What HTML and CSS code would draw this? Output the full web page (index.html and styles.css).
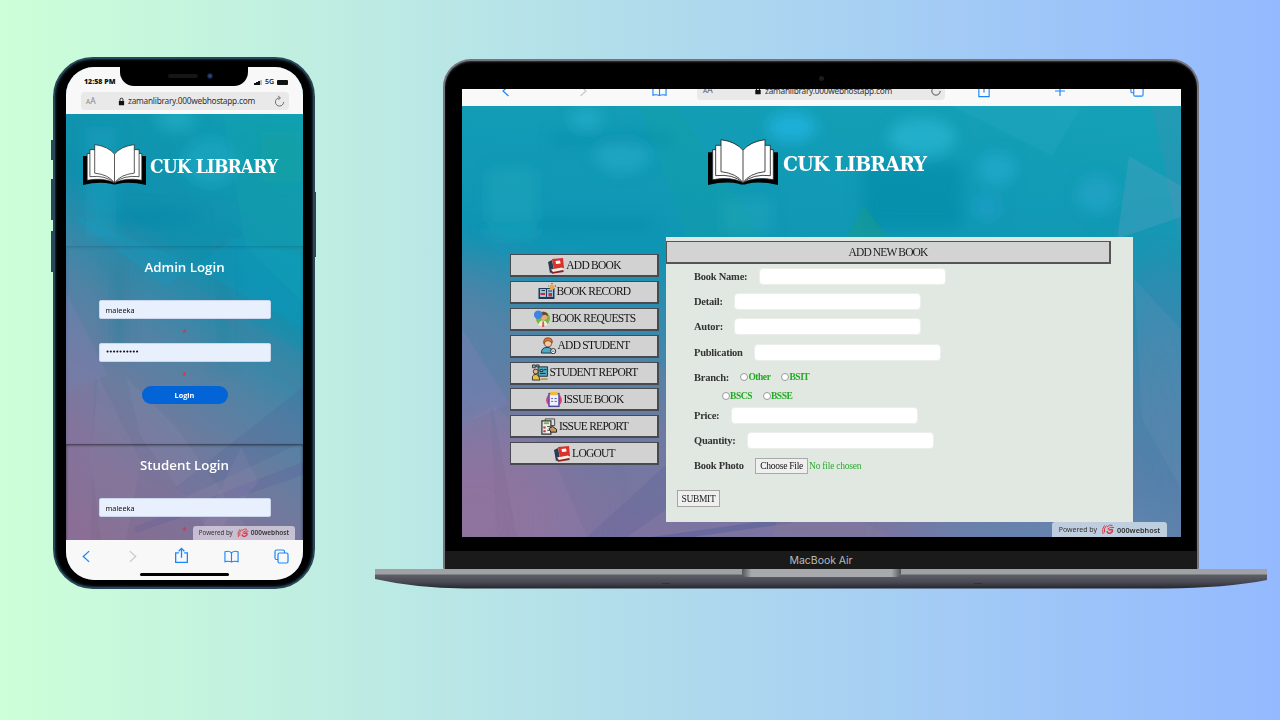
FILE: index.html
```html
<!DOCTYPE html>
<html lang="en">
<head>
<meta charset="utf-8">
<title>CUK Library</title>
<link rel="stylesheet" href="styles.css">
</head>
<body>
<svg class="defs" width="0" height="0">
  <defs>
    <linearGradient id="wash" x1=".65" y1="0" x2=".35" y2="1">
      <stop offset="0" stop-color="#0f9fb4"/><stop offset=".36" stop-color="#118fad"/>
      <stop offset=".55" stop-color="#4f83a5"/><stop offset=".7" stop-color="#6d7b9e"/><stop offset=".82" stop-color="#7d7399"/><stop offset="1" stop-color="#866c90"/>
    </linearGradient>
    <linearGradient id="washWide" x1=".6" y1="0" x2=".4" y2="1">
      <stop offset="0" stop-color="#14a0b6"/><stop offset=".42" stop-color="#0f95b4"/>
      <stop offset=".62" stop-color="#4a84a8"/><stop offset=".8" stop-color="#6f7aa2"/><stop offset="1" stop-color="#7d74a0"/>
    </linearGradient>
    <filter id="soft" x="-30%" y="-30%" width="160%" height="160%"><feGaussianBlur stdDeviation="7"/></filter>
    <filter id="mist" x="-50%" y="-50%" width="200%" height="200%"><feGaussianBlur stdDeviation="28"/></filter>
    <linearGradient id="deck" x1="0" y1="0" x2="0" y2="1"><stop offset="0" stop-color="#606168"/><stop offset=".6" stop-color="#464751"/><stop offset="1" stop-color="#24252d"/></linearGradient>
    <linearGradient id="lip" x1="0" x2="1"><stop offset="0" stop-color="#55565a"/><stop offset=".06" stop-color="#a8a9ad"/><stop offset=".94" stop-color="#a8a9ad"/><stop offset="1" stop-color="#55565a"/></linearGradient>
  </defs>
  <symbol id="book" viewBox="0 0 210 138" preserveAspectRatio="none">
    <path d="M0 40H14V120Q62 114 105 128Q148 114 196 120V40H210V138Q158 126 118 134Q105 139 92 134Q52 126 0 138Z" fill="#000"/>
    <g fill="#fff" stroke="#222" stroke-width="2.5" stroke-linejoin="round">
      <path d="M105 131Q70 112 14 122V32H28L105 60L182 32H196V122Q140 112 105 131Z"/>
      <path d="M105 131Q76 104 23 110V19H42L105 50L168 19H187V110Q134 104 105 131Z"/>
      <path d="M105 131Q86 103 39 98V2Q84 8 105 34Q126 8 171 2V98Q124 103 105 131Z"/>
      <path d="M105 34V131"/>
    </g>
  </symbol>
  <symbol id="back" viewBox="0 0 14 14"><path d="M9.5 2L4 7L9.5 12"/></symbol>
  <symbol id="fwd" viewBox="0 0 14 14"><path d="M4.5 2L10 7L4.5 12"/></symbol>
  <symbol id="share" viewBox="0 0 14 16"><path d="M4.5 5.5H1.5V14.5H12.5V5.5H9.5M7 10V1.5M4.3 4L7 1.3L9.7 4"/></symbol>
  <symbol id="openbook" viewBox="0 0 16 14"><path d="M8 3Q5 .5 1 2V12.5Q5 11.5 8 12.8Q11 11.5 15 12.5V2Q11 .5 8 3V12.8"/></symbol>
  <symbol id="tabs" viewBox="0 0 15 15"><path d="M10.5 4V2.5Q10.5 1 9 1H2.5Q1 1 1 2.5V9Q1 10.5 2.5 10.5H4"/><rect x="4" y="4" width="10" height="10" rx="1.5"/></symbol>
  <symbol id="plus" viewBox="0 0 14 14"><path d="M7 2V12M2 7H12"/></symbol>
  <symbol id="reload" viewBox="0 0 12 14"><path d="M6 3A4.5 4.5 0 1 0 10.5 7.5M4.5 1L7 3L4.8 5.4"/></symbol>
  <symbol id="lock" viewBox="0 0 8 10"><rect x="1" y="4.5" width="6" height="4.8" rx=".6" fill="#111"/><path d="M2.3 5V3Q2.3 1.2 4 1.2T5.7 3V5" fill="none" stroke="#111"/></symbol>
  <symbol id="host" viewBox="0 0 26 22"><g fill="none" stroke="#d93a42" stroke-width="2"><path d="M6 3Q0 10 3 20M10 3Q4 9 6 17"/><path d="M11 6Q16 0 22 3M12 10Q17 5 25 7"/><path d="M11 14Q12 20 18 18Q24 15 21 11L14 12" stroke-width="3"/></g></symbol>

  <symbol id="i-books" viewBox="0 0 18 17"><path d="M1 5L5 3L7 14L3 16Z" fill="#2b3b52"/><path d="M5 2L16 1L17 11L7 13Z" fill="#d8322b"/><path d="M8.5 4L13 3.5L13.6 6.5L9 7Z" fill="#fff"/><path d="M4 12.5L15 10.5L17 12.5L6 15Z" fill="#f8efe0"/><path d="M3 13.5L6 15L16.5 13V15L5 16.8Z" fill="#8d1e24"/></symbol>
  <symbol id="i-record" viewBox="0 0 18 17"><path d="M.5 5H16.5V16H.5Z" fill="#1e3a55"/><path d="M2 6H8V14H2ZM9 6H15V14H9Z" fill="#9fc4da"/><path d="M2.5 10H7V12H2.5ZM10.5 10H14V13.5H10.5Z" fill="#c52e38"/><path d="M3.5 7.5H7M10 8H14" stroke="#1e3a55"/><circle cx="14" cy="4" r="2.5" fill="#eda348"/><path d="M14 0V1M10.5 3H11M17 3H18" stroke="#333"/></symbol>
  <symbol id="i-request" viewBox="0 0 18 18"><circle cx="10" cy="9" r="7.5" fill="#78b83a"/><path d="M5 16Q6 11 10 11T15 16L10 18Z" fill="#f5e8e1"/><circle cx="11" cy="7" r="3.7" fill="#e8ab78"/><path d="M7.5 6Q8 1 12 2T15 7L13 5Z" fill="#74412c"/><circle cx="5" cy="5" r="4.5" fill="#3e83e6"/><path d="M9.5 12H11L11.5 18H9Z" fill="#dc5a51"/></symbol>
  <symbol id="i-student" viewBox="0 0 18 18"><path d="M2 17Q2 11 8 11Q14 11 14 17Z" fill="#4aa9c9" stroke="#26313b"/><circle cx="9" cy="6.5" r="4" fill="#f6c9a1" stroke="#333" stroke-width=".7"/><path d="M4.5 7V4Q5 .8 9 .8T13.5 4V6Q9 3 7 4Q6 6 4.5 7Z" fill="#e2772d" stroke="#5b321c" stroke-width=".7"/><circle cx="14.5" cy="15" r="2.7" fill="#fff" stroke="#222"/><path d="M13 15H16" stroke="#222" stroke-width=".8"/></symbol>
  <symbol id="i-report" viewBox="0 0 18 18"><path d="M7 3H17V13H7Z" fill="#51a5bd" stroke="#203640"/><path d="M9 6H12V8H9ZM13 6H16M9 10H15" fill="#8fd0dd" stroke="#17303b"/><path d="M1 1H4V4H1ZM5 1H8V3H5Z" fill="#77b8c2" stroke="#333"/><circle cx="4.5" cy="8" r="2.6" fill="#e9b480" stroke="#333"/><path d="M1 17V13Q2 11 5 11T9 17Z" fill="#e9bf3c" stroke="#333"/><path d="M10 16H17" stroke="#b99c3c" stroke-width="2"/></symbol>
  <symbol id="i-issue" viewBox="0 0 18 18"><ellipse cx="9" cy="9.5" rx="8.5" ry="7" fill="#dc4183"/><path d="M3 2H15V17H3Z" fill="#5148a0"/><path d="M4.5 3.5H13.5V15.5H4.5Z" fill="#eef0ff"/><path d="M5 1H13V4.5H5Z" fill="#f3bb3c"/><path d="M6 8H8M9.5 8H12M6 11H8M9.5 11H12" stroke="#4f5aa8"/></symbol>
  <symbol id="i-issuereport" viewBox="0 0 18 18"><path d="M5 1H15V8H5Z" fill="#ddd" stroke="#444"/><path d="M1.5 3H11V17H1.5Z" fill="#eee" stroke="#333" stroke-width="1.3"/><path d="M3.5 4.5H9V6.5H3.5Z" fill="#73b552"/><path d="M3 9H5.5V11H3ZM3 13H5.5V15H3Z" fill="#c23737"/><path d="M7 9H10M7 13H10" stroke="#444"/><path d="M9 11L13 9L17 12V15H11Z" fill="#c9965f" stroke="#222"/></symbol>
</svg>

<main class="stage">
  <section class="phone">
    <i class="key k1"></i><i class="key k2"></i><i class="key k3"></i><i class="key k4"></i>
    <div class="phone-screen">
      <svg class="backdrop" viewBox="0 0 237 513" preserveAspectRatio="none">
        <rect width="237" height="513" fill="url(#wash)"/>
        <g filter="url(#soft)">
          <ellipse cx="110" cy="52" rx="20" ry="12" fill="#2cb5cd" opacity=".5"/><ellipse cx="145" cy="95" rx="28" ry="24" fill="#22aac4" opacity=".6"/>
          <ellipse cx="80" cy="150" rx="55" ry="8" fill="#0587a5" opacity=".5"/><rect x="195" y="65" width="40" height="50" fill="#0b9e9d" opacity=".6"/>
          <rect x="20" y="60" width="30" height="110" fill="#16a5c3" opacity=".4"/>
          <rect x="45" y="195" width="16" height="90" fill="#2c7f9c" opacity=".5"/><rect x="150" y="170" width="14" height="130" fill="#27809f" opacity=".35"/>
        </g>
        <path d="M157 47L180 180L237 235V47Z" fill="#18a8ab" opacity=".2"/>
        <path d="M0 145L110 190L237 262V190L170 170L100 220Z" fill="#0aa5cf" opacity=".22"/>
        <path d="M0 145L237 285V330L130 225Z" fill="#5f7b9a" opacity=".18"/>
        <path d="M0 225L42 308L0 325Z" fill="#8080b8" opacity=".3"/><path d="M0 325L28 312L25 473H0Z" fill="#a07bae" opacity=".18"/>
        <path d="M32 308L75 395L60 473H35L25 395Z" fill="#a08bb2" opacity=".14"/>
        <path d="M60 310L110 360L190 473H150L75 370Z" fill="#a49abc" opacity=".12"/>
        <path d="M110 420L237 320V375L120 430Z" fill="#4b5f98" opacity=".2"/><path d="M68 460L237 395V408L70 466Z" fill="#57539a" opacity=".2"/><path d="M130 473L175 380L192 415L145 473Z" fill="#a88bbd" opacity=".15"/>
      </svg>
      <header class="phone-top">
        <div class="status"><b>12:58 PM</b><span class="signal"><i></i><i></i><i></i><i></i></span><b class="net">5G</b><i class="battery"></i></div>
        <div class="address"><span class="aa"><small>A</small>A</span><svg class="lock"><use href="#lock"/></svg><span class="url">zamanlibrary.000webhostapp.com</span><svg class="reload line"><use href="#reload"/></svg></div>
      </header>
      <div class="notch"><i class="speaker"></i><i class="lens"></i></div>
      <div class="phone-page">
        <div class="brand"><svg><use href="#book"/></svg><span>CUK LIBRARY</span></div>
        <form class="login">
          <h2>Admin Login</h2>
          <div class="field">maleeka</div><em>*</em>
          <div class="field dots">••••••••••</div><em>*</em>
          <div class="login-btn">Login</div>
        </form>
        <form class="login second">
          <h2>Student Login</h2>
          <div class="field">maleeka</div><em>*</em>
        </form>
        <div class="badge"><span>Powered by</span><svg><use href="#host"/></svg><b>000webhost</b></div>
      </div>
      <footer class="phone-nav">
        <div class="nav-row line"><svg><use href="#back"/></svg><svg class="off"><use href="#fwd"/></svg><svg class="tall"><use href="#share"/></svg><svg><use href="#openbook"/></svg><svg><use href="#tabs"/></svg></div>
        <i class="home"></i>
      </footer>
    </div>
  </section>

  <section class="laptop">
    <div class="lid">
      <i class="camera"></i>
      <div class="laptop-screen">
        <svg class="backdrop" viewBox="0 0 719 448" preserveAspectRatio="none">
          <rect width="719" height="448" fill="url(#washWide)"/>
          <g filter="url(#mist)"><ellipse cx="15" cy="430" rx="90" ry="90" fill="#8d6f9a" opacity=".8"/><ellipse cx="0" cy="260" rx="50" ry="80" fill="#5f80a6" opacity=".8"/><ellipse cx="700" cy="330" rx="45" ry="170" fill="#4b83ad" opacity=".8"/><ellipse cx="590" cy="450" rx="140" ry="25" fill="#5b8bb5"/></g>
          <g filter="url(#soft)">
            <ellipse cx="124" cy="30" rx="17" ry="12" fill="#2ab1cd" opacity=".6"/><ellipse cx="160" cy="66" rx="27" ry="18" fill="#25abc9" opacity=".6"/>
            <ellipse cx="330" cy="38" rx="25" ry="15" fill="#1eb3e0" opacity=".8"/><ellipse cx="460" cy="48" rx="34" ry="19" fill="#29b6d3" opacity=".7"/><ellipse cx="535" cy="80" rx="19" ry="16" fill="#22a9cc" opacity=".8"/>
            <ellipse cx="525" cy="118" rx="13" ry="14" fill="#189fc7" opacity=".8"/><ellipse cx="635" cy="105" rx="20" ry="18" fill="#23a6cd" opacity=".6"/>
            <path d="M90 45H210V55H90ZM20 130H190V140H20ZM400 75H500V140H400Z" fill="#058aa7" opacity=".6"/><path d="M25 80H75V150H25ZM260 110H310V145H260Z" fill="#24a9bd" opacity=".4"/>
          </g>
          <path d="M178 17L225 150H300L215 17Z" fill="#14a79b" opacity=".2"/><path d="M640 17H719V160L690 17Z" fill="#4a8bb0" opacity=".25"/>
          <path d="M719 97L667 67L655 150L719 128Z" fill="#6fa4c3" opacity=".25"/><path d="M385 148L402 117L425 148Z" fill="#179b8b" opacity=".5"/><path d="M490 17L590 67L620 17Z" fill="#3bb6cd" opacity=".15"/>
          <path d="M0 134L205 215V280L110 220Z" fill="#2192bc" opacity=".22"/><path d="M0 240L48 315L0 335Z" fill="#8080b8" opacity=".3"/><path d="M0 335L28 318L35 448H0Z" fill="#a07bae" opacity=".2"/>
          <path d="M30 315L90 365L125 448H55Z" fill="#a087b5" opacity=".16"/><path d="M125 448L205 375V420L165 448Z" fill="#4c5998" opacity=".2"/><path d="M190 448L330 428V434L230 448Z" fill="#4c5998" opacity=".4"/>
          <path d="M315 432H400L430 448H310Z" fill="#84789c" opacity=".5"/><path d="M672 190L719 240V400L680 330Z" fill="#7294b8" opacity=".18"/>
        </svg>
        <div class="laptop-bar"><div class="bar-row line">
          <svg class="b1"><use href="#back"/></svg><svg class="b2 off"><use href="#fwd"/></svg><svg class="b3"><use href="#openbook"/></svg>
          <div class="address wide"><span class="aa"><small>A</small>A</span><svg class="lock"><use href="#lock"/></svg><span class="url">zamanlibrary.000webhostapp.com</span><svg class="reload"><use href="#reload"/></svg></div>
          <svg class="b4"><use href="#share"/></svg><svg class="b5"><use href="#plus"/></svg><svg class="b6"><use href="#tabs"/></svg>
        </div></div>
        <div class="laptop-page">
          <div class="brand large"><svg><use href="#book"/></svg><span>CUK LIBRARY</span></div>
          <div class="columns">
            <nav class="menu">
              <a><svg><use href="#i-books"/></svg>ADD BOOK</a>
              <a><svg><use href="#i-record"/></svg>BOOK RECORD</a>
              <a><svg><use href="#i-request"/></svg>BOOK REQUESTS</a>
              <a><svg><use href="#i-student"/></svg>ADD STUDENT</a>
              <a><svg><use href="#i-report"/></svg>STUDENT REPORT</a>
              <a><svg><use href="#i-issue"/></svg>ISSUE BOOK</a>
              <a><svg><use href="#i-issuereport"/></svg>ISSUE REPORT</a>
              <a><svg><use href="#i-books"/></svg>LOGOUT</a>
            </nav>
            <div class="panel">
              <div class="panel-title">ADD NEW BOOK</div>
              <div class="rows">
                <div class="row"><label>Book Name:</label><i class="input"></i></div>
                <div class="row"><label>Detail:</label><i class="input"></i></div>
                <div class="row"><label>Autor:</label><i class="input"></i></div>
                <div class="row"><label>Publication</label><i class="input"></i></div>
                <div class="row"><label>Branch:</label><span class="opt"><i></i>Other</span><span class="opt"><i></i>BSIT</span></div>
                <div class="row half"><span class="opt"><i></i>BSCS</span><span class="opt"><i></i>BSSE</span></div>
                <div class="row"><label>Price:</label><i class="input"></i></div>
                <div class="row"><label>Quantity:</label><i class="input"></i></div>
                <div class="row"><label>Book Photo</label><span class="file">Choose File</span><span class="nofile">No file chosen</span></div>
              </div>
              <div class="submit">SUBMIT</div>
            </div>
          </div>
        </div>
        <div class="badge wide"><span>Powered by</span><svg><use href="#host"/></svg><b>000webhost</b></div>
      </div>
      <div class="chin">MacBook Air</div>
    </div>
    <svg class="base" viewBox="0 0 892 20"><path d="M0 5H892V11Q850 19 790 19.5H90Q40 19 0 10Z" fill="url(#deck)"/><rect width="892" height="5.5" fill="#a0a1a5"/><path d="M367 0H526V4Q526 8 520 8H373Q367 8 367 4Z" fill="url(#lip)"/><path d="M287 14.5H295M599 14.5H607" stroke="#30313a" stroke-width="1"/></svg>
  </section>
</main>
</body>
</html>
```
FILE: styles.css
```css
* { box-sizing: border-box; }
body { margin: 0; font-family: "Noto Sans", sans-serif; }
.defs { position: absolute; }
i, em { font-style: normal; display: block; }
svg { display: block; flex: none; }
.line svg { fill: none; stroke: #1a86fb; stroke-width: 1.2; }
.line svg.off { stroke: #c9c9cb; }
.stage { display: flex; align-items: flex-start; width: 1280px; height: 720px; padding: 57px 0 0 53px; overflow: hidden; background: linear-gradient(90deg, #cdffd8, #94b9ff); }

.phone { position: relative; width: 262px; height: 532px; padding: 8px 10px 7px 11px; border: 2px solid #29475a; border-radius: 40px; background: #000; box-shadow: inset 0 0 2px 1px #1b2c3a; }
.key { position: absolute; width: 2px; background: #2c4659; }
.k1 { left: -4px; top: 81px; height: 20px; }
.k2 { left: -4px; top: 120px; height: 41px; }
.k3 { left: -4px; top: 172px; height: 41px; }
.k4 { right: -3px; top: 133px; height: 65px; }
.phone-screen { position: relative; display: flex; flex-direction: column; width: 237px; height: 513px; border-radius: 28px; overflow: hidden; }
.backdrop { position: absolute; left: 0; top: 0; width: 100%; height: 100%; }
.phone-top { position: relative; height: 47px; background: #f8f8f8; padding: 9px 14px 0 15px; }
.status { display: flex; align-items: center; height: 12px; padding-left: 3px; font: 700 7px/12px "Open Sans", sans-serif; color: #111; }
.signal { display: flex; align-items: flex-end; gap: .5px; margin-left: auto; height: 6px; }
.signal i { width: 1.5px; background: #111; height: 2px; }
.signal i:nth-child(2) { height: 3px; }
.signal i:nth-child(3) { height: 4.5px; }
.signal i:nth-child(4) { height: 5.5px; background: #bbb; }
.net { margin: 0 3px; font-weight: 600; }
.battery { width: 11px; height: 5px; border-radius: 1px; background: #111; margin-right: 1px; }
.address { display: flex; align-items: center; width: 208px; height: 18px; margin-top: 4px; padding: 0 4px 0 5px; border-radius: 4px; background: #e9e9ea; color: #333; font: 8.3px/18px "Noto Sans", sans-serif; }
.aa { width: 32px; color: #888; font-size: 8.5px; }
.aa small { font-size: 6.5px; }
.address .lock { width: 7px; height: 9px; margin-right: 3px; stroke: none; }
.url { white-space: nowrap; width: 127px; letter-spacing: -.25px; }
.address .reload { width: 11px; height: 13px; margin-left: auto; stroke: #666; fill: none; stroke-width: 1; }
.notch { position: absolute; left: 54px; top: -1px; width: 128px; height: 20px; border-radius: 0 0 14px 14px; background: #000; display: flex; align-items: center; justify-content: center; gap: 9px; padding: 0 0 1px 12px; }
.speaker { width: 30px; height: 4px; border-radius: 2px; background: #161616; }
.lens { width: 6px; height: 6px; border-radius: 50%; background: radial-gradient(#28498c 20%, #0c1424 70%); }
.phone-page { position: relative; height: 426px; overflow: hidden; }
.brand { display: flex; align-items: center; height: 132px; padding: 0 0 32px 17px; color: #fff; font: 700 19px/24px "DejaVu Serif Condensed", "DejaVu Serif", serif; font-stretch: condensed; }
.brand svg { width: 63px; height: 41px; }
.brand span { margin: 3px 0 0 4px; width: 128px; white-space: nowrap; letter-spacing: -.9px; }
.login { display: flex; flex-direction: column; align-items: center; height: 198px; margin: 0; padding-top: 11px; box-shadow: inset 0 1px 3px rgba(15, 50, 70, .25); }
.login.second { height: 130px; box-shadow: inset 0 1px 3px rgba(0, 0, 0, .6); }
.login h2 { margin: 0 0 22px; color: #fff; font: 600 13.3px/21px "Open Sans", sans-serif; }
.field { flex: none; width: 172px; height: 19px; padding-left: 6px; border: 1px solid #cad6ec; border-radius: 2px; background: #e8f0fe; color: #111; font: 7.3px/18px "Noto Sans", sans-serif; }
.field.dots { font: 7px/17px "DejaVu Sans", sans-serif; letter-spacing: -.85px; }
.login em { height: 24px; color: #e32b38; font: 8px/28px "Noto Sans", sans-serif; }
.login-btn { width: 86px; height: 18px; border-radius: 9px; background: #0264d6; color: #fff; font: 700 7.3px/18px "Open Sans", sans-serif; text-align: center; }
.badge { position: absolute; right: 8px; bottom: 0; display: flex; align-items: center; justify-content: center; width: 102px; height: 14px; border-radius: 3px 3px 0 0; background: rgba(218, 210, 224, .8); color: #333; font: 6.2px/14px "Noto Sans", sans-serif; white-space: nowrap; }
.badge svg { width: 12px; height: 10px; margin: 0 2px 0 4px; }
.badge b { font-weight: 600; font-size: 6.5px; }
.badge.wide { right: 14px; width: 115px; height: 15px; background: rgba(207, 220, 232, .85); font-size: 7px; }
.badge.wide svg { width: 14px; height: 11px; }
.badge.wide b { font-size: 7.3px; }
.phone-nav { position: relative; height: 40px; background: #f8f8f8; padding: 7px 14px 0 13px; }
.nav-row { display: flex; align-items: center; gap: 35.3px; height: 20px; }
.nav-row svg { width: 15px; height: 15px; margin-top: -2px; }
.nav-row svg:nth-child(2) { margin-right: -2px; margin-left: -4px; }
.nav-row svg.tall { height: 17px; margin-top: -4px; }
.home { width: 89px; height: 3px; margin: 6px auto 0; border-radius: 2px; background: #000; }

.laptop { width: 892px; margin: 2px 0 0 60px; flex: none; }
.lid { position: relative; width: 756px; height: 511px; margin-left: 68px; padding: 28px 15px 0 17px; background: #000; border: 2px solid #74767b; border-bottom: 0; border-radius: 28px 28px 3px 3px; box-shadow: inset 0 1px 2px #3b3c40; overflow: hidden; }
.camera { position: absolute; left: 374px; top: 15px; width: 5px; height: 5px; border-radius: 50%; background: #1b1b1e; }
.laptop-screen { position: relative; width: 719px; height: 448px; overflow: hidden; }
.laptop-bar { position: relative; height: 17px; background: #f9f9f9; overflow: hidden; }
.bar-row { display: flex; align-items: center; height: 20px; margin-top: -8px; }
.bar-row svg { width: 14px; height: 14px; }
.bar-row .b1 { margin-left: 37px; }
.bar-row .b2 { margin-left: 63px; }
.bar-row .b3 { margin-left: 62px; width: 15px; margin-top: -2px; }
.bar-row .address { width: 248px; height: 19px; margin: -2px 0 0 30px; flex: none; padding: 0 3px 0 6px; border-radius: 4px; line-height: 21px; }
.address.wide .aa { width: 51px; color: #555; }
.bar-row .address .lock { width: 8px; height: 9px; stroke: none; }
.bar-row .address .reload { width: 12px; height: 13px; stroke: #444; }
.bar-row .b4 { margin-left: 32px; height: 15px; margin-top: -2px; }
.bar-row .b5 { margin-left: 62px; }
.bar-row .b6 { margin-left: 63px; margin-top: -2px; }
.laptop-page { position: relative; }
.brand.large { height: 131px; padding: 0 0 20px 246px; font-size: 21px; }
.brand.large svg { width: 70px; height: 46px; }
.brand.large span { width: 144px; margin: 4px 0 0 5px; letter-spacing: -.75px; }
.columns { display: flex; padding-left: 48px; font-family: "Liberation Serif", serif; }
.menu { display: flex; flex-direction: column; gap: 3.9px; width: 149px; padding-top: 17px; margin-right: 7px; }
.menu a { display: flex; align-items: center; justify-content: center; height: 23px; flex: none; gap: 1px; padding-bottom: 1px; border: 1px solid #474b4f; border-right-width: 2px; border-bottom-width: 2px; background: #d2d2d2; color: #151515; font-size: 11.5px; line-height: 18px; letter-spacing: -.75px; white-space: nowrap; }
.menu svg { width: 18px; height: 17px; margin-top: 1px; }
.panel { width: 467px; height: 285px; padding-top: 4px; background: #e1e8e1; }
.panel-title { width: 445px; height: 23px; border: 1.5px solid #555; border-bottom-width: 2px; border-right-width: 2px; background: #d3d3d3; color: #222; font-size: 11.5px; line-height: 20px; letter-spacing: -.85px; text-align: center; }
.rows { padding-left: 28px; margin-top: -.4px; color: #333; font-size: 10.5px; letter-spacing: -.24px; }
.row { display: flex; align-items: center; height: 25.3px; }
.row.half { height: 12.5px; padding-left: 28px; }
.row label { font-weight: 700; margin-right: 11.3px; white-space: nowrap; }
.input { width: 187px; height: 17px; border-radius: 4px; background: #fff; border: 1px solid #eceeec; }
.opt { display: flex; align-items: center; font-size: 9.5px; letter-spacing: -.45px; font-weight: 700; color: #22aa25; margin-right: 11px; }
.opt i { width: 8px; height: 8px; border: 1px solid #999; border-radius: 50%; background: #fff; }
.file { height: 16px; padding: 0 4px; border: 1px solid #aaa; background: #efefef; font-size: 9.5px; letter-spacing: -.25px; line-height: 14px; color: #111; margin-right: 1px; white-space: nowrap; }
.nofile { font-size: 9.5px; letter-spacing: -.22px; color: #2bab2f; }
.submit { width: 43px; height: 17px; margin: 12px 0 0 11px; border: 1px solid #a5a5a5; background: #efefef; color: #222; font-size: 9.5px; letter-spacing: -.35px; line-height: 16px; text-align: center; }
.chin { height: 19px; margin: 14px -15px 0 -17px; background: #1a1a1a; color: #b9b9bb; font: 10.5px/19px Inter, sans-serif; letter-spacing: -.05px; text-align: center; }
.base { width: 892px; height: 20px; margin-top: -1px; position: relative; }
```
